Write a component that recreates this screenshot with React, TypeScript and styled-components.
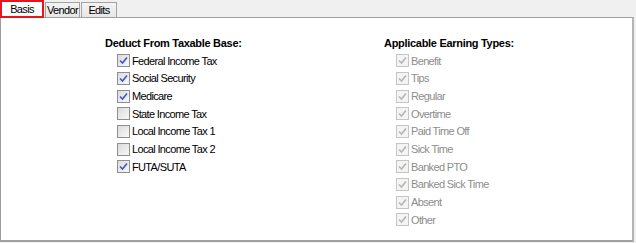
import React from "react";
import styled, { createGlobalStyle } from "styled-components";

const GlobalStyle = createGlobalStyle`
  body {
    margin: 0;
    background: #f0f0f0;
    font-family: "Liberation Sans", Arial, sans-serif;
    font-size: 11px;
    letter-spacing: -0.65px;
    color: #000;
  }
`;

const Window = styled.div`
  width: 636px;
  height: 243px;
  display: flex;
  flex-direction: column;
`;

const TabStrip = styled.div`
  display: flex;
  align-items: flex-end;
  height: 17px;
`;

const Tab = styled.div<{ $active?: boolean; $width: number }>`
  box-sizing: border-box;
  height: ${(p) => (p.$active ? "18px" : "15px")};
  width: ${(p) => p.$width}px;
  display: flex;
  align-items: center;
  justify-content: center;
  background: ${(p) => (p.$active ? "#fff" : "linear-gradient(#f4f4f4, #e6e6e6)")};
  border: ${(p) => (p.$active ? "2px solid #e8141b" : "1px solid #a3a3a3")};
  border-bottom: ${(p) => (p.$active ? "2px solid #e8141b" : "none")};
  margin-right: 1px;
  position: relative;
  z-index: ${(p) => (p.$active ? 1 : 0)};
  margin-bottom: ${(p) => (p.$active ? "-1px" : "0")};
`;

const Panel = styled.div`
  box-sizing: border-box;
  width: 634px;
  height: 225px;
  background: #fff;
  border: 1px solid #a0a0a0;
  border-left-color: #9a9ca4;
  border-bottom: 2px solid #a0a0a0;
  border-right: 2px solid #b4b4b4;
  display: grid;
  grid-template-columns: 279px 1fr;
  padding: 18px 0 0 104px;
`;

const Column = styled.div`
  display: flex;
  flex-direction: column;
`;

const Heading = styled.div`
  font-weight: bold;
  letter-spacing: -0.3px;
  height: 14px;
  line-height: 14px;
  margin-bottom: 2px;
`;

const Row = styled.label<{ $disabled?: boolean }>`
  display: flex;
  align-items: center;
  height: 17.67px;
  padding-left: 12px;
  gap: 2px;
  color: ${(p) => (p.$disabled ? "#8d8d8d" : "#000")};
`;

const Box = styled.span<{ $disabled?: boolean }>`
  box-sizing: border-box;
  width: 13px;
  height: 13px;
  border: 1px solid ${(p) => (p.$disabled ? "#c5c5c5" : "#8e8f8f")};
  background: ${(p) =>
    p.$disabled ? "#f4f4f4" : "linear-gradient(135deg, #dcdcdc, #f8f8f8)"};
  display: flex;
  align-items: center;
  justify-content: center;
  flex-shrink: 0;
`;

const Check = ({ color }: { color: string }) => (
  <svg width="9" height="9" viewBox="0 0 9 9">
    <path d="M1 4.5 L3.5 7 L8 1.5" fill="none" stroke={color} strokeWidth="1.6" />
  </svg>
);

type Item = { label: string; checked: boolean };

const deductions: Item[] = [
  { label: "Federal Income Tax", checked: true },
  { label: "Social Security", checked: true },
  { label: "Medicare", checked: true },
  { label: "State Income Tax", checked: false },
  { label: "Local Income Tax 1", checked: false },
  { label: "Local Income Tax 2", checked: false },
  { label: "FUTA/SUTA", checked: true },
];

const earnings = [
  "Benefit",
  "Tips",
  "Regular",
  "Overtime",
  "Paid Time Off",
  "Sick Time",
  "Banked PTO",
  "Banked Sick Time",
  "Absent",
  "Other",
];

const CheckRow = ({ label, checked, disabled }: Item & { disabled?: boolean }) => (
  <Row $disabled={disabled}>
    <Box $disabled={disabled}>
      {checked && <Check color={disabled ? "#b5b5b5" : "#3a59c6"} />}
    </Box>
    {label}
  </Row>
);

const App = () => (
  <Window>
    <GlobalStyle />
    <TabStrip>
      <Tab $active $width={44}>Basis</Tab>
      <Tab $width={35}>Vendor</Tab>
      <Tab $width={36}>Edits</Tab>
    </TabStrip>
    <Panel>
      <Column>
        <Heading>Deduct From Taxable Base:</Heading>
        {deductions.map((d) => (
          <CheckRow key={d.label} {...d} />
        ))}
      </Column>
      <Column>
        <Heading>Applicable Earning Types:</Heading>
        {earnings.map((e) => (
          <CheckRow key={e} label={e} checked disabled />
        ))}
      </Column>
    </Panel>
  </Window>
);

export default App;
